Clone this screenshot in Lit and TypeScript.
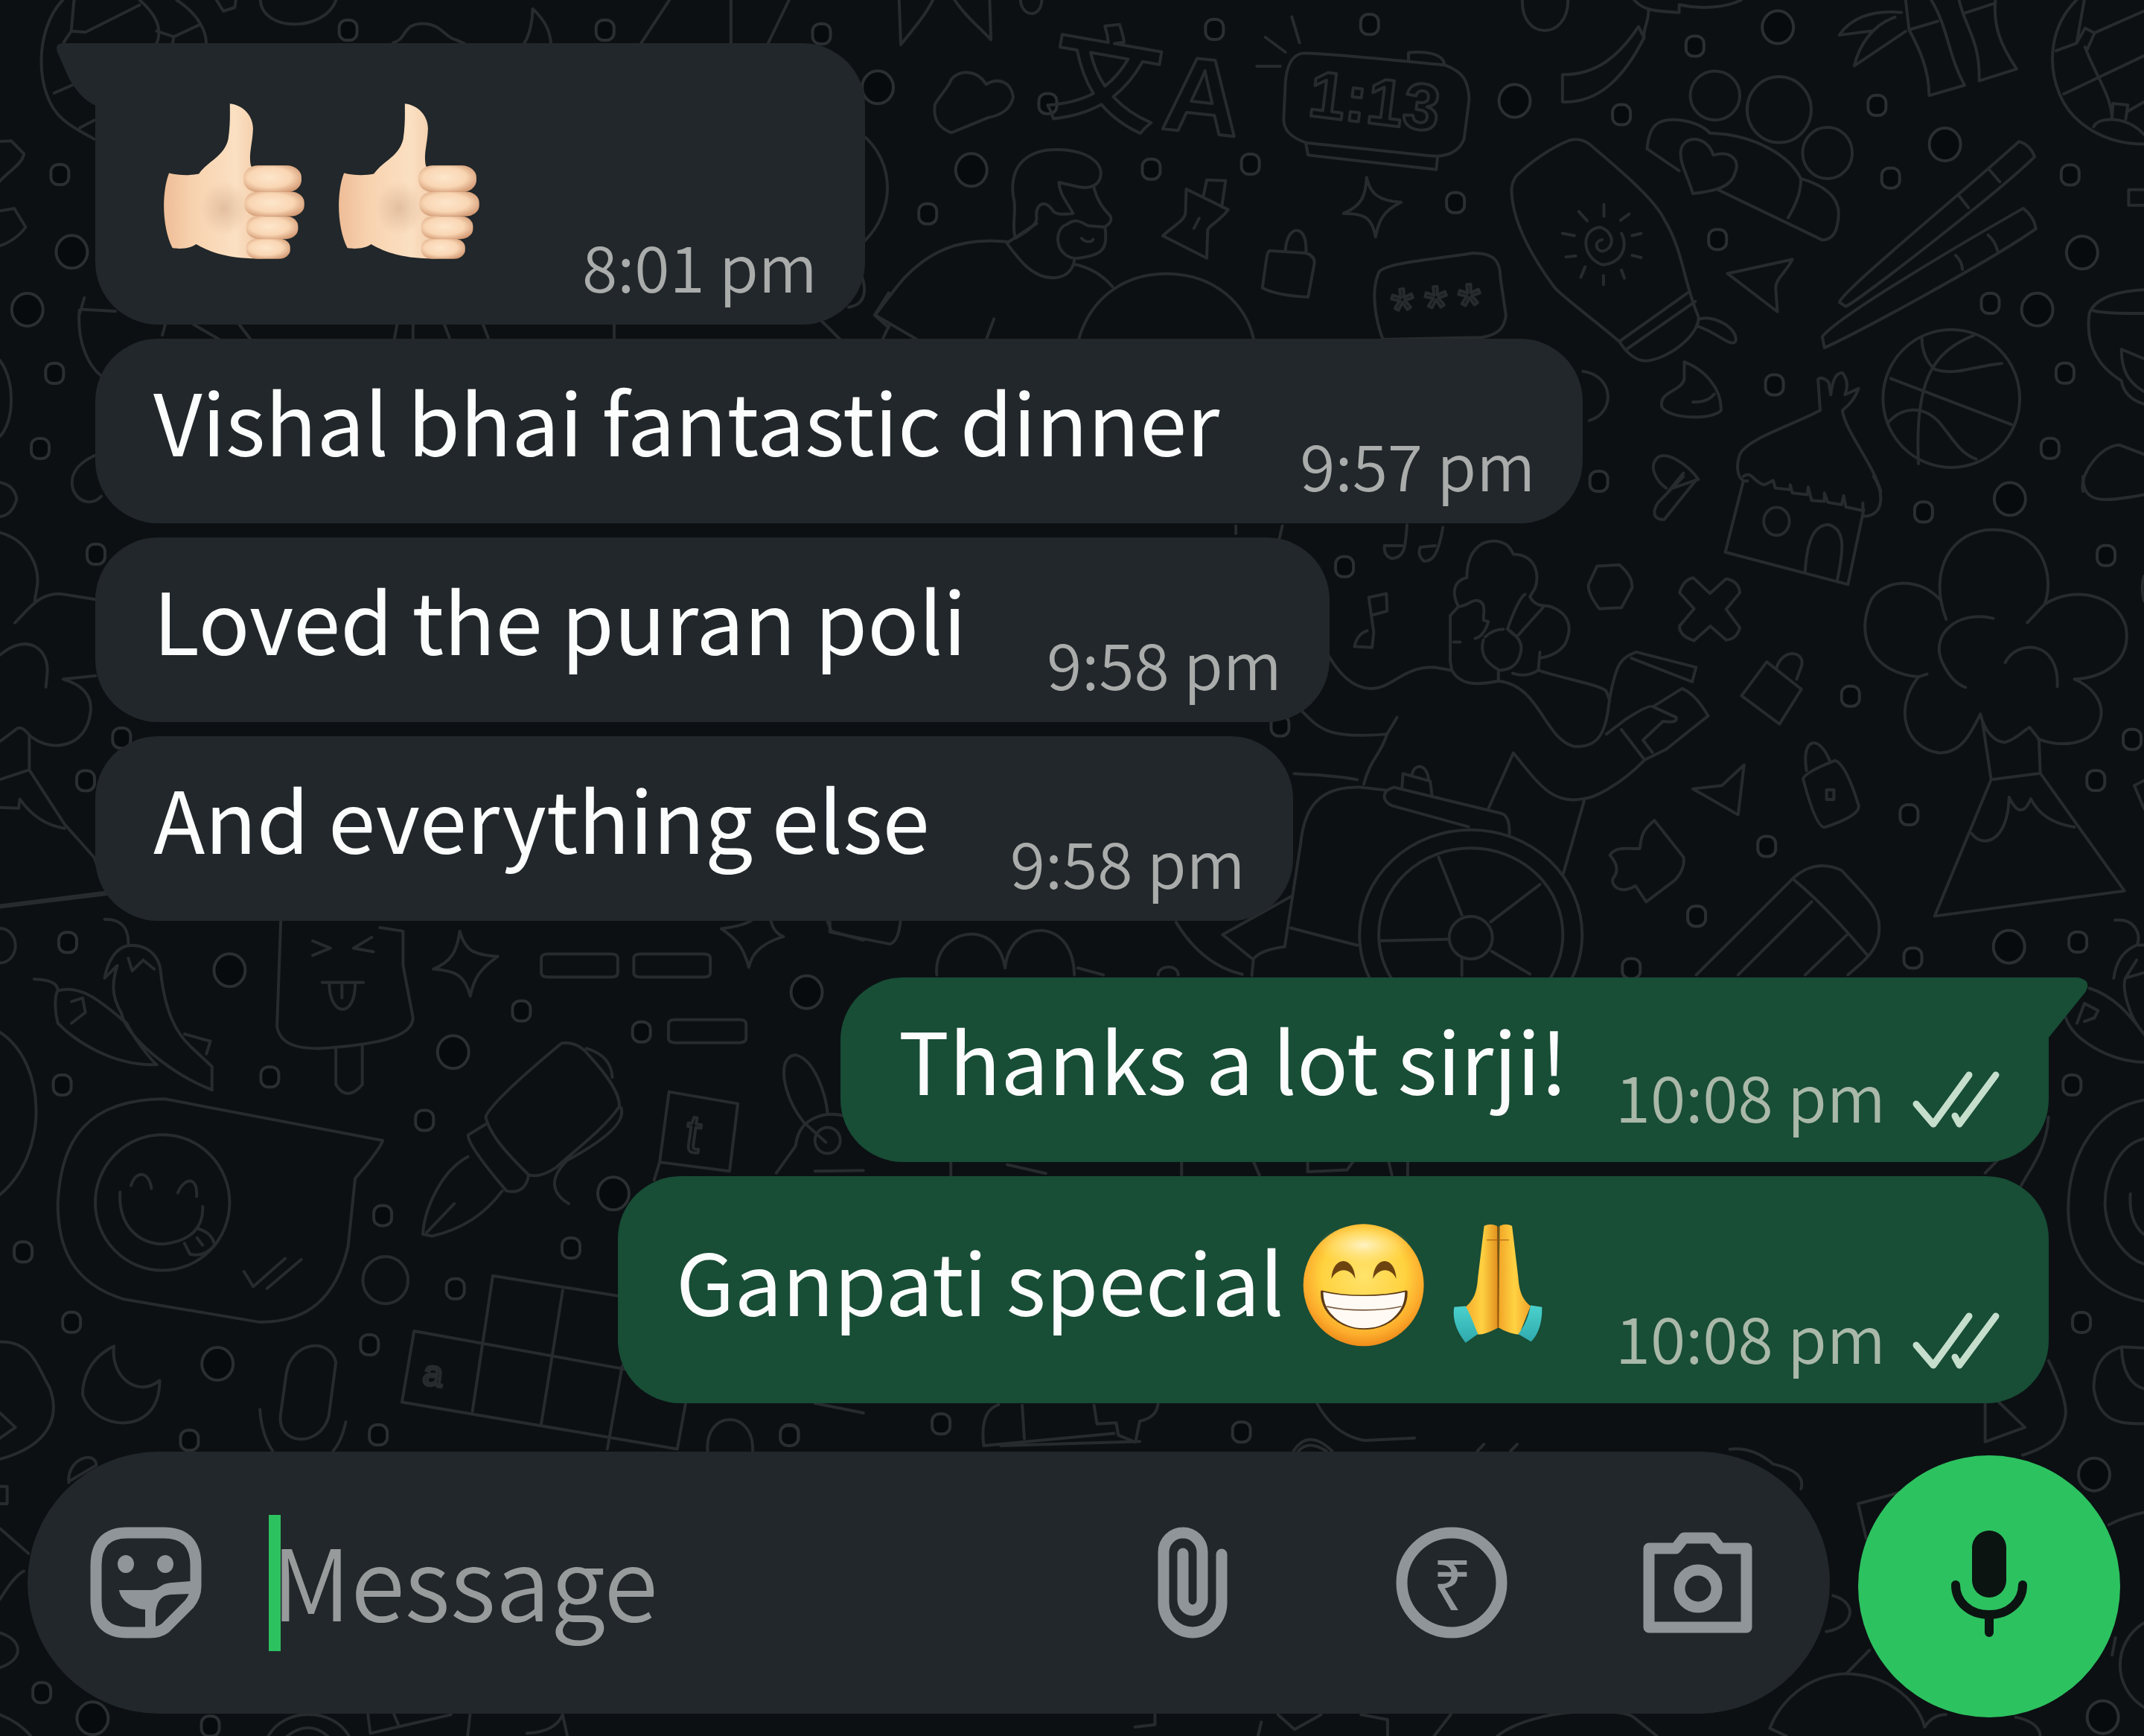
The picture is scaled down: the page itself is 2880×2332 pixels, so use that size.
import { LitElement, html, svg, css, nothing } from "lit";
import { customElement, property } from "lit/decorators.js";

type Point = [number, number];
type Ellipse = [number, number, number, number];

/** A patch of the wallpaper: its origin, the units per pixel of its drawing, and the drawing. */
interface Patch {
  x: number;
  y: number;
  sx: number;
  sy: number;
  paths: string[];
  beads?: Point[];
  rings?: Point[];
  ovals?: Ellipse[];
}

const patches: Patch[] = [
  {
    x: 0, y: 0, sx: 1.3067, sy: 3,
    paths: [
      "M110 0C60 120 60 380 110 480C130 520 150 540 165 560M130 0L125 125L112 170M125 125L150 130L245 20M245 0C275 60 285 120 275 175M310 0C350 60 362 130 362 175M275 125L305 148L350 100M305 148L303 175M95 375L135 335M140 515L165 485",
      "M380 0L392 45L412 30L414 0M457 0C460 130 570 130 590 0M690 172C715 160 705 95 742 95C775 95 780 150 800 160L815 175M920 175C930 140 935 80 935 35C960 90 965 130 967 175M1125 175L1175 0M1283 0V185M1385 0L1347 180",
      "M0 570L20 568L42 620C40 660 10 700 0 730M0 850L25 840L45 915C35 950 15 980 0 990",
      "M290 1308L285 1350M340 1308L385 1368M420 1308L440 1368M697 1308L692 1368M725 1308V1368M780 1308L790 1368M848 1308L858 1368M1078 1300V1368M1440 1290C1460 1330 1465 1350 1475 1368M1560 1180L1535 1270L1560 1320",
    ],
    beads: [[611, 120], [1062, 120], [1442, 135], [105, 702]],
    rings: [[126, 1015], [48, 1248]],
  },
  {
    x: 1140, y: 0, sx: 1.742, sy: 3,
    paths: [
      "M118 0L122 180C150 120 180 60 197 0M248 0C270 60 300 100 333 160L330 0M402 0C405 70 450 75 452 0",
      "M202 420C215 380 235 350 240 320C260 280 300 280 322 340C350 310 380 330 385 390C380 440 355 465 325 475L240 535C205 510 198 470 202 420Z",
      "M1060 215C1100 210 1350 255 1395 262C1440 290 1450 330 1452 400L1440 560C1430 610 1400 635 1360 628L1070 575C1030 550 1018 520 1018 480L1022 330C1025 270 1035 225 1060 215ZM1310 240L1310 212C1350 205 1390 215 1394 258M1070 580L1075 625L1375 683L1378 632M975 150L1022 210M1037 68L1055 172M955 267H1010",
      "M390 960C380 900 395 850 385 790C375 650 430 600 490 603C560 605 600 660 588 720C580 760 550 760 530 750L492 735C495 790 510 810 525 860C500 865 485 865 478 850C460 800 435 820 440 880C440 910 410 940 390 960M573 750C580 800 590 830 612 870C620 900 600 910 600 915C605 1000 600 1030 530 1042C480 1030 480 920 510 905C530 880 540 890 560 910L600 915M545 960C555 980 570 975 572 965",
      "M370 980C400 1050 430 1120 480 1120C515 1115 525 1080 528 1050M528 1065C570 1080 600 1120 617 1155M370 980L440 900M375 975C250 950 180 1030 130 1120C100 1180 80 1230 62 1270L160 1368M95 1310L80 1365M340 1285L322 1368",
      "M538 1368C570 1180 660 1100 745 1103C860 1105 930 1230 948 1368M30 540C110 650 110 850 35 975M30 1110C45 1180 35 1230 0 1238",
      "M790 762L888 845C870 890 840 910 840 930L838 1040L735 950C760 910 785 890 788 860ZM830 790L838 725L882 728L873 835M808 920L820 880",
      "M1212 715C1220 780 1240 810 1293 815C1250 850 1240 890 1233 955C1225 880 1210 860 1158 860C1200 830 1210 790 1212 715Z",
      "M985 1010L1070 1020Q1090 1030 1090 1060L1075 1197Q1000 1190 968 1160L978 1040Q980 1015 985 1010ZM1022 1010C1025 900 1075 900 1070 1018",
      "M1240 1100C1250 1060 1350 1050 1460 1020C1510 1020 1525 1050 1525 1120L1538 1270C1535 1320 1520 1350 1480 1360L1250 1368C1235 1300 1220 1180 1240 1100Z",
    ],
    beads: [[466, 416], [856, 117], [1219, 97], [708, 680], [940, 660], [185, 860], [1420, 815]],
    rings: [[68, 352], [287, 685]],
  },
  {
    x: 1980, y: 0, sx: 1.742, sy: 2.376,
    paths: [
      "M113 0C110 130 220 130 220 0M375 0C400 40 440 35 480 40L480 15C530 30 590 25 625 0M408 30C410 70 395 90 398 120C350 250 290 330 207 325V238C290 240 340 170 372 110L385 85L398 120",
      "M480 545L405 475C410 400 430 380 470 382C510 385 540 405 552 425C660 430 740 500 765 570C840 600 855 650 853 690C850 740 840 765 815 766L570 605M765 570C765 620 750 660 735 695",
      "M512 618C500 560 480 520 484 480C490 430 545 430 560 495C600 480 625 510 610 555C600 600 560 610 512 618Z",
      "M100 560C130 520 180 470 225 447Q250 440 270 460C330 530 420 630 445 700C490 800 490 900 525 1010C530 1070 450 1150 400 1152C370 1150 350 1110 340 1090C280 1020 210 950 190 920C130 810 90 700 88 610Q88 580 100 560ZM340 1090L505 930M360 1112L518 962M525 1020C560 1000 620 1050 612 1090C600 1110 570 1060 520 1040",
      "M300 765C280 770 285 800 300 802C330 795 330 740 295 725C250 730 250 820 300 845C350 840 360 780 345 745M304 652V690M245 675L265 705M363 683L343 703M207 745L235 752M391 745L370 752M215 820L238 817M391 822L370 815M250 885L260 852M303 908V880M352 888L345 862",
      "M593 873L745 828C730 870 705 890 706 920L710 995Z",
      "M855 965C860 930 1130 630 1275 452Q1300 460 1312 500C1240 600 900 960 870 978ZM1205 540L1230 580M1135 625L1157 663M815 1075C850 1010 1150 770 1285 665Q1310 690 1315 730C1200 840 900 1060 820 1110ZM1203 750Q1220 770 1225 800M1127 815Q1142 835 1143 860",
      "M855 112C880 60 930 30 1000 40M855 112L935 98M890 210C900 150 930 80 985 55M890 210L1010 100M1010 0L1018 95C1040 150 1065 220 1065 305L1148 272C1110 180 1110 90 1070 0M1018 95L1085 68M1135 0C1150 90 1185 130 1182 258L1270 220C1230 140 1215 80 1220 0M1148 42L1220 10",
      "M1410 0C1350 80 1340 200 1370 300C1400 400 1480 460 1568 460M1362 162L1410 138L1428 0M1410 138L1430 90L1452 105L1568 35M1452 105L1435 158M1430 150C1450 230 1490 300 1493 375M1380 300L1568 178M1450 405C1460 370 1530 370 1568 430M1493 375L1495 330L1530 335L1525 380M1568 325L1530 355M1568 605H1532V655H1568",
      "M1170 1070C1080 1120 1030 1200 1040 1480M1048 1080C1048 1120 1060 1160 1080 1180C1130 1200 1180 1165 1235 1160M975 1208L1258 1355M968 1350C1000 1300 1050 1290 1090 1350C1120 1400 1140 1450 1175 1465",
      "M1568 925C1490 930 1450 960 1440 1000C1430 1100 1460 1170 1515 1215C1520 1260 1545 1280 1568 1290M1450 992C1480 1002 1530 1000 1568 1000M1568 1145L1515 1115C1515 1180 1530 1220 1568 1250",
      "M492 1155C540 1180 580 1240 578 1310C560 1340 460 1340 440 1300C430 1250 485 1250 492 1210ZM512 1283C540 1285 555 1270 562 1258M255 1185C330 1200 330 1320 270 1342",
      "M810 1310L805 1210Q815 1200 830 1220L835 1260Q840 1190 862 1190Q880 1220 868 1260L900 1240Q890 1280 862 1310C870 1380 930 1470 952 1568M810 1310C740 1360 640 1400 622 1450C610 1500 620 1540 640 1535M460 1560L525 1530C500 1480 450 1440 430 1460C405 1490 430 1540 450 1558M490 1510L455 1568",
      "M1425 1568C1415 1510 1470 1420 1510 1420L1568 1450",
    ],
    beads: [[517, 146], [345, 365], [943, 335], [975, 567], [570, 763], [1395, 557], [1208, 967], [703, 1227], [1383, 1190], [1348, 1430], [292, 1535]],
    rings: [[711, 87], [95, 322], [1102, 461], [1423, 806], [1318, 988]],
    ovals: [[564, 305, 58, 78], [714, 350, 75, 105], [827, 488, 58, 82], [1117, 1272, 160, 220]],
  },
  {
    x: 1980, y: 640, sx: 1.742, sy: 2.24,
    paths: [
      "M520 10L445 130C415 130 420 100 430 80L490 0",
      "M630 15L588 228L875 325L912 100M912 120C960 120 960 50 935 0M775 285C780 180 800 145 830 145C870 160 865 220 850 312M630 0C650 -20 655 20 680 25L700 12L705 35L740 40V25L745 50L780 55L782 32L790 72L820 75V50L828 78L860 85L865 58L870 92L910 103V80",
      "M1425 0C1425 80 1465 80 1568 55M288 270L340 266Q372 300 370 335L345 395L293 398Q265 350 268 325Z",
      "M513 305L552 352L590 308Q620 315 622 350L590 400L622 455Q615 490 590 492L553 450L515 494Q480 480 481 450L515 398L481 350Q490 310 513 305Z",
      "M685 558L766 640L715 745L626 660ZM708 575C725 510 780 530 765 575L755 610M770 910Q775 890 845 855Q870 865 900 990Q905 1020 820 1056Q800 1055 770 910ZM778 885C765 780 810 780 832 855M825 943H842V972H825Z",
      "M512 940L580 930L632 868L618 1018Z",
      "M422 1035L490 1145Q495 1180 470 1215L403 1280L378 1232C340 1260 320 1230 325 1210C345 1180 325 1150 318 1140C330 1115 350 1120 388 1120C392 1070 400 1060 422 1035Z",
      "M1105 430C1060 280 1120 160 1215 160C1330 160 1360 300 1335 385L1295 440M1090 370C1040 300 960 310 930 370C890 480 930 590 1040 603L1060 595M1215 427C1130 400 1060 480 1100 570Q1120 620 1150 635M1335 385C1400 330 1500 350 1525 450C1540 550 1480 605 1405 610C1460 640 1480 700 1460 750C1440 810 1370 815 1320 790M1243 560C1270 490 1370 490 1365 632M1040 603C980 700 1010 820 1090 832C1140 830 1160 780 1185 715C1195 770 1220 800 1243 800C1270 790 1280 770 1300 755L1322 790L1325 893L1210 912L1190 740",
      "M1210 912L1078 1323L1522 1247L1325 893M1165 1075C1190 1120 1250 1100 1252 965Q1280 1040 1303 970Q1330 1040 1405 1055",
      "M520 1500L750 1205Q800 1150 860 1185C920 1270 950 1300 948 1360C950 1430 900 1470 875 1500M750 1215C820 1290 880 1380 920 1440M618 1500L790 1280M775 1500L872 1380",
      "M1568 300C1560 330 1565 360 1568 375M1568 915L1545 930L1568 1000M1500 1335C1550 1330 1560 1380 1552 1410C1510 1430 1500 1480 1497 1510M1552 1410H1568",
    ],
    beads: [[1052, 106], [1479, 237], [881, 660], [685, 1112], [1018, 1017], [1455, 914], [521, 1322], [1027, 1448], [1413, 1400], [1540, 790], [368, 1480]],
    rings: [[1254, 68], [1252, 1415]],
    ovals: [[708, 135, 30, 42]],
  },
  {
    x: 1640, y: 680, sx: 2.24, sy: 2.45,
    paths: [
      "M402 462L455 465L460 415L445 300L498 288L500 345L460 357M402 462Q410 420 440 410M560 62C555 130 555 170 515 172Q490 165 492 130L545 130M668 70C655 150 640 185 610 180Q590 160 600 135L645 130M185 65L175 110M45 65V90",
      "M740 235C740 150 780 110 830 115C860 120 870 135 880 158C950 160 960 230 945 270L930 298C940 320 960 330 985 328C1050 350 1060 400 1035 455C1010 490 980 495 960 500M740 235C690 250 700 300 715 330C740 330 750 310 770 310C800 315 790 350 790 375L805 380Q790 430 765 435M715 330L690 360V510L695 540M700 447H720M795 430Q820 405 850 405M915 290C900 300 880 350 862 405L890 430L968 335M862 405C900 430 910 460 900 490C890 530 860 540 838 540C790 510 780 480 790 440M960 480L955 540Q920 565 878 550",
      "M310 465C360 570 410 600 450 600C520 600 540 530 640 530L695 540C720 590 770 590 835 575C960 590 970 760 1060 790C1150 800 1160 720 1170 630C1190 520 1200 500 1250 480L1430 530L1418 578L1235 500M955 540C1040 570 1150 590 1160 610L1170 640M835 575V545",
      "M1160 750L1220 700Q1290 650 1300 660L1370 695Q1375 715 1330 708L1270 770L1298 810M1300 660L1388 600Q1430 620 1466 690L1340 800L1275 835L1205 735",
      "M1275 835C1200 920 1120 960 1095 962C1000 985 960 920 880 812L805 995M1095 962L1030 1210M240 670C300 740 330 765 500 750L530 695M500 750C480 820 450 830 430 915M220 880C280 885 350 885 410 900",
      "M240 1110C250 1000 290 920 420 925L500 935L520 925L840 1010Q870 1015 868 1080M500 935C480 960 500 985 530 990L745 1055M545 925L548 880Q580 890 630 905L635 950M575 885C580 845 620 845 625 900",
      "M655 1155L725 1345M960 1245L812 1368M480 1430L685 1425M725 1485V1545M815 1465L930 1540M240 1110L192 1450Q120 1460 98 1490L93 1545M210 1388L410 1445M210 1285L5 1410L95 1490",
    ],
    beads: [[372, 198], [178, 722]],
    ovals: [[752, 1410, 335, 345], [752, 1410, 277, 285], [752, 1420, 65, 70]],
  },
  {
    x: 0, y: 1200, sx: 1.352, sy: 2.063,
    paths: [
      "M0 38L195 2M0 385C85 470 90 720 0 835",
      "M190 72Q235 70 233 145C265 140 290 170 292 220C300 330 320 390 350 430L385 480L385 545C310 500 230 400 220 330C200 280 205 240 213 200L190 235C195 190 210 150 233 145M233 180L240 215L260 185L280 210M62 238Q105 240 105 270C150 250 190 310 230 360C250 420 280 470 285 475C200 480 130 400 105 360C98 320 100 280 105 270M130 300L150 290L155 330L130 360M335 390L382 410L375 445",
      "M510 75L503 370C510 420 540 430 580 430C680 420 750 400 750 345L732 200V105L690 95M610 430V530Q630 580 658 530V425M568 132L600 152L568 172M675 122L642 152L678 162M585 247H660M598 250C598 340 645 350 645 250M621 255V290",
      "M835 105C845 160 860 170 904 175C870 210 860 240 854 285C845 230 830 215 787 210C820 190 830 160 835 105ZM1310 98Q1350 90 1365 75M1400 75Q1405 110 1423 120C1380 140 1365 170 1360 205C1350 150 1340 130 1310 98",
      "M995 168H1110Q1122 168 1122 180V220Q1122 232 1110 232H995Q983 232 983 220V180Q983 168 995 168ZM1163 168H1278Q1290 168 1290 180V220Q1290 232 1278 232H1163Q1151 232 1151 220V180Q1151 168 1163 168ZM1226 350H1343Q1355 350 1355 362V402Q1355 414 1343 414H1226Q1214 414 1214 402V362Q1214 350 1226 350Z",
      "M300 570L695 685Q690 710 645 790L632 980C610 1120 560 1190 470 1188L225 1125C130 1080 105 980 105 860C110 680 160 570 300 570Z",
      "M218 828C215 920 250 970 295 972C350 965 370 920 368 868M238 810C245 770 270 765 275 818M323 830C335 785 360 785 357 840M345 1000L335 970M360 930Q385 940 390 975Q370 1010 345 1000M358 955L368 975M443 1048L460 1090L518 1012M485 1095L547 1015",
      "M1020 415Q1050 410 1070 450C1100 500 1125 550 1125 590C1100 650 1030 730 1010 760Q980 790 960 780C920 720 890 670 882 620Q890 580 1020 415ZM882 640L850 670Q850 700 920 825Q955 835 960 780M850 730C800 770 770 880 768 945L785 950C840 930 880 890 912 825M775 940L825 860M1065 430Q1110 450 1112 510M1128 595Q1140 650 1030 740C990 800 1010 840 1033 860",
      "M1215 550L1340 583L1325 770L1198 745L1215 550M1198 745L1188 795M1503 78L1510 105L1568 130",
      "M1460 635C1420 560 1410 450 1445 448C1480 460 1500 560 1503 610M1445 700C1450 620 1500 600 1540 620M1445 700L1410 775M1480 770L1568 768M1460 635L1500 690",
      "M895 1060L1140 1120M895 1060L858 1435M752 1213L1140 1320M752 1213L730 1410L1230 1540M1022 1100L983 1470M1130 1310L1103 1540M1245 1415L1230 1540M1285 1545C1280 1430 1370 1430 1367 1545M1480 1413L1568 1440",
      "M207 1255C160 1290 150 1350 150 1390C170 1490 290 1510 290 1350C250 1400 200 1340 207 1255ZM520 1330C530 1240 600 1230 610 1300L597 1450C580 1540 500 1530 510 1440ZM472 1430Q475 1500 495 1545M628 1465Q620 1520 605 1545",
      "M0 1243C60 1240 70 1320 90 1370C110 1450 90 1530 0 1568M0 1440L28 1480L0 1510",
    ],
    beads: [[123, 135], [947, 325], [113, 530], [490, 508], [1165, 383], [771, 628], [695, 892], [42, 993], [1037, 982], [827, 1095], [130, 1188], [671, 1250], [344, 1515], [687, 1500], [1434, 1500]],
    rings: [[417, 213], [823, 440], [1465, 274], [1114, 832], [395, 1304]],
    ovals: [[700, 1072, 41, 65], [0, 145, 28, 48], [295, 857, 122, 188], [1503, 685, 23, 36]],
  },
  {
    x: 0, y: 1920, sx: 1.568, sy: 3,
    paths: [
      "M145 215C140 120 200 80 203 145L150 205M0 400L60 500M0 685Q30 590 50 572M0 820C50 850 50 930 0 960M0 1150Q40 1180 65 1236M0 230H15V300H0",
      "M565 1236C600 1120 700 1120 735 1236M605 1236Q650 1170 690 1236M775 1150L780 1225L950 1150M830 1150L840 1195M990 1150L985 1236M1110 1225Q1170 1220 1185 1150L1195 1236",
    ],
    beads: [[88, 1060], [443, 1195]],
    rings: [[195, 1165]],
  },
  {
    x: 1480, y: 1940, sx: 1.12, sy: 3,
    paths: [
      "M945 20Q980 10 1010 80Q1060 110 1052 180M1100 610C1140 640 1130 740 1090 755M1155 830L1120 925C1060 930 1020 1040 1005 1145L1030 1176M1120 925C1190 930 1230 1050 1238 1140Q1250 1090 1270 1090M1375 1100Q1410 1120 1412 1176M1150 380L1138 240L1200 195M1515 325Q1540 290 1568 275M1568 720C1520 800 1520 980 1568 1060M1525 780L1520 850",
      "M595 1176C650 1060 780 1060 800 1100L835 1176M525 1090L500 1176M240 1120L235 1176M265 1090L290 1150L330 1090M390 1090L430 1110V1176M50 1140L80 1130V1090M295 30Q310 -20 338 28M565 28L575 0M615 28L625 0",
    ],
    rings: [[1493, 122], [1506, 1100]],
  },
  {
    x: 0, y: 400, sx: 3, sy: 1.782,
    paths: [
      "M320 30C310 100 350 160 408 187M320 40L340 0M335 28L465 32M0 150C60 200 60 290 0 332M0 442Q60 450 67 482Q50 520 0 524M380 378C300 400 280 430 295 460C320 495 380 495 408 475",
      "M0 562C110 580 160 640 150 690L140 725M60 778C110 750 160 700 260 710L385 722M0 855C110 800 200 840 190 900L185 932M255 913L385 905M255 913C350 930 370 960 365 990C350 1080 200 1090 118 1047Q85 1020 60 1035L0 1062M118 1047V1130L0 1153M118 1130L260 1260L380 1340L430 1423L0 1455M0 1220L75 1222L80 1200Q150 1260 260 1270",
    ],
    beads: [[220, 180], [162, 360], [387, 613], [345, 1155], [490, 1053]],
  },
  {
    x: 2640, y: 1280, sx: 3, sy: 2.063,
    paths: [
      "M500 98C600 120 660 170 720 225M405 180C430 240 580 300 720 303M450 195L480 140L535 160L520 180L480 190M720 225C660 180 630 100 645 70L690 20M645 70L720 55",
      "M720 408C530 430 410 560 415 720C420 850 540 940 720 965M720 515C620 530 560 620 563 700C570 790 660 850 720 862M665 668C660 720 680 760 720 780",
      "M335 455C330 540 260 600 225 645M130 575L80 610M335 1130C380 1190 400 1230 405 1270C400 1340 330 1370 230 1392M80 1245V1355L240 1315L135 1245M720 1095L630 1092C540 1110 515 1160 518 1210C540 1300 620 1305 720 1305M630 1092C630 1160 670 1200 720 1208",
    ],
    beads: [[430, 365], [468, 1023]],
  },
  {
    x: 1000, y: 1220, sx: 1.742, sy: 2.119,
    paths: [
      "M200 40L200 68L340 102Q360 95 365 38M450 190C440 60 590 20 610 170C620 30 770 20 772 190M780 170L840 190M968 190C970 160 1015 160 1015 190M1010 40C1050 120 1100 170 1165 188",
      "M483 718V760M615 730L705 755M1023 718V760M1190 718L1205 760M1318 718V750L1410 745L1425 720M1507 718L1515 760M1552 718V760",
      "M595 1413Q550 1430 560 1530L865 1495M600 1530L925 1518M650 1415L655 1510M818 1415L825 1468L870 1465L875 1500L915 1520L925 1460Q965 1450 968 1410M1340 1410Q1380 1500 1450 1515L1568 1508M1285 1545Q1320 1480 1375 1545",
    ],
    beads: [[105, 1500], [460, 1467], [1163, 1490]],
  },
];

@customElement("chat-wallpaper")
class ChatWallpaper extends LitElement {
  static styles = css`
    :host { display: block; }
    .canvas { display: block; width: 100%; height: 100%; }
    .lines { fill: none; stroke: #272b2d; stroke-width: 4; stroke-linejoin: round; stroke-linecap: round; }
    .lines path, .lines ellipse { vector-effect: non-scaling-stroke; }
    .bead { fill: #080b0e; stroke: #2b2f31; }
    .letter { font-family: "Liberation Sans", "Noto Sans CJK SC", sans-serif; }
  `;

  render() {
    return html`
      <svg class="canvas" viewBox="0 0 2880 2332" preserveAspectRatio="xMidYMin slice" aria-hidden="true">
        <g class="lines">
          ${patches.map((p) => svg`
            <g transform="translate(${p.x} ${p.y}) scale(${1 / p.sx} ${1 / p.sy})">
              ${p.paths.map((d) => svg`<path d=${d} />`)}
              ${(p.ovals ?? []).map(([cx, cy, rx, ry]) => svg`<ellipse cx=${cx} cy=${cy} rx=${rx} ry=${ry} />`)}
            </g>
            ${(p.beads ?? []).map(([x, y]) => svg`
              <rect class="bead" x=${p.x + x / p.sx - 12} y=${p.y + y / p.sy - 13} width="24" height="27" rx="10" />`)}
            ${(p.rings ?? []).map(([x, y]) => svg`
              <ellipse class="bead" cx=${p.x + x / p.sx} cy=${p.y + y / p.sy} rx="21" ry="22" />`)}
          `)}
          <g class="letter">
            <text x="1412" y="158" font-size="148" font-weight="700" transform="rotate(10 1486 100)">文</text>
            <text x="1564" y="178" font-size="144" font-weight="700" transform="rotate(6 1612 120)">A</text>
            <text x="1758" y="166" font-size="88" font-weight="700" transform="rotate(7 1846 140)">1:13</text>
            <text x="1868" y="440" font-size="80" letter-spacing="14" transform="rotate(-4 1930 400)">***</text>
            <text x="922" y="1548" font-size="72" transform="rotate(8 935 1520)">t</text>
            <text x="568" y="1862" font-size="48" transform="rotate(8 585 1850)">a</text>
          </g>
        </g>
      </svg>`;
  }
}

const thumb = html`
  <svg class="thumb" viewBox="285 412 255 636" preserveAspectRatio="none" role="img" aria-label="👍🏻">
    <defs>
      <linearGradient id="palm" x1="0" x2="1">
        <stop offset="0" stop-color="#eebd97" /><stop offset=".3" stop-color="#f8d3b0" />
        <stop offset=".7" stop-color="#fbe0c2" /><stop offset="1" stop-color="#efc6a2" />
      </linearGradient>
      <radialGradient id="knuckle" cx=".45" cy=".45" r=".62">
        <stop offset="0" stop-color="#fde6cb" /><stop offset=".6" stop-color="#f9d6b4" /><stop offset="1" stop-color="#d39a74" />
      </radialGradient>
      <radialGradient id="hollow"><stop offset="0" stop-color="#d3ab8c" stop-opacity=".6" /><stop offset="1" stop-color="#d3ab8c" stop-opacity="0" /></radialGradient>
    </defs>
    <path fill="url(#palm)" d="M405 416C430 422 447 470 446 520C445 580 438 620 442 665L470 780L460 1043C395 1045 365 1010 345 985C335 1003 315 1006 303 1000C285 920 283 780 297 697C315 707 335 707 350 700C365 650 395 630 402 560C406 500 405 450 405 416Z" />
    <ellipse cx="395" cy="840" rx="42" ry="110" fill="url(#hollow)" />
    <g fill="url(#knuckle)">
      <rect x="434" y="962" width="78" height="82" rx="20" ry="36" />
      <rect x="434" y="871" width="92" height="93" rx="22" ry="42" />
      <rect x="431" y="772" width="106" height="100" rx="24" ry="44" />
      <rect x="429" y="666" width="103" height="108" rx="26" ry="48" />
    </g>
  </svg>`;

const grin = html`
  <svg class="grin" viewBox="79 124 235 497" preserveAspectRatio="none" role="img" aria-label="😁">
    <defs>
      <radialGradient id="face" cx=".5" cy=".42" r=".58">
        <stop offset="0" stop-color="#ffe36b" /><stop offset=".6" stop-color="#ffd23f" />
        <stop offset=".85" stop-color="#fcab2b" /><stop offset="1" stop-color="#ee8c1b" />
      </radialGradient>
      <radialGradient id="shine"><stop offset="0" stop-color="#fff3c4" /><stop offset="1" stop-color="#ffe58c" stop-opacity="0" /></radialGradient>
    </defs>
    <ellipse cx="196" cy="372" rx="116" ry="247" fill="url(#face)" />
    <ellipse cx="196" cy="210" rx="88" ry="80" fill="url(#shine)" />
    <path fill="#6d4410" d="M134 347C136 250 178 250 180 347C170 300 146 300 134 347ZM214 347C216 250 257 250 259 347C249 300 226 300 214 347Z" />
    <path fill="#fffaf3" stroke="#5b3a16" stroke-width="5" stroke-linejoin="round" d="M116 396C160 420 232 420 278 396C280 480 245 549 197 549C150 549 114 480 116 396Z" />
    <path fill="none" stroke="#7b5d42" stroke-width="5" d="M125 458C165 478 230 478 269 458" />
  </svg>`;

const prayer = html`
  <svg class="prayer" viewBox="364 124 173 484" preserveAspectRatio="none" role="img" aria-label="🙏">
    <defs>
      <linearGradient id="left-hand" x1="0" x2="1"><stop offset="0" stop-color="#f7ac2c" /><stop offset=".5" stop-color="#ffd242" /><stop offset="1" stop-color="#e08d1c" /></linearGradient>
      <linearGradient id="right-hand" x1="0" x2="1"><stop offset="0" stop-color="#f2a527" /><stop offset=".5" stop-color="#ffd242" /><stop offset="1" stop-color="#f2a12a" /></linearGradient>
      <linearGradient id="cuff" x1="0" x2="0" y1="0" y2="1"><stop offset="0" stop-color="#4bd2cd" /><stop offset="1" stop-color="#2fa9ad" /></linearGradient>
    </defs>
    <path fill="url(#left-hand)" d="M424 132Q436 120 449 132L452 545C430 570 415 577 408 572L388 462C405 430 410 400 412 340Z" />
    <path fill="url(#right-hand)" d="M454 132Q466 120 478 132L490 340C492 400 498 430 514 458L492 574C480 572 465 562 452 545Z" />
    <path fill="none" stroke="#9c5a0c" stroke-width="3" d="M451 135V545M429 190H472" />
    <path fill="url(#cuff)" d="M366 462L388 458C400 500 405 540 412 572L388 607C370 560 362 510 366 462ZM514 455L536 462C537 520 530 570 515 603L490 572C502 540 510 500 514 455Z" />
  </svg>`;

@customElement("chat-bubble")
class ChatBubble extends LitElement {
  @property() time = "";
  @property({ type: Boolean, reflect: true }) outgoing = false;
  @property({ type: Boolean, reflect: true }) tail = false;

  static styles = css`
    :host {
      --paint: #21272a;
      position: relative;
      display: flex;
      align-items: flex-end;
      align-self: flex-start;
      gap: 108px;
      padding: 0 64px 0 78px;
      border-radius: 84px;
      background: var(--paint);
      color: #fbfcfc;
    }
    :host([outgoing]) { --paint: #184d36; align-self: flex-end; gap: 64px; }
    :host([tail]:not([outgoing])) { border-top-left-radius: 0; }
    :host([tail][outgoing]) { border-top-right-radius: 0; }
    :host([tail])::before {
      content: "";
      position: absolute;
      top: 0;
      width: 56px;
      height: 84px;
      background: var(--paint);
    }
    :host([tail]:not([outgoing]))::before { right: calc(100% - 1px); clip-path: path("M56 0H12Q0 0 4 12L20 48Q36 76 56 84Z"); }
    :host([tail][outgoing])::before { left: calc(100% - 1px); clip-path: path("M0 0H40Q60 4 50 20L0 82Z"); }
    .stamp { display: flex; align-items: flex-end; gap: 36px; padding-bottom: 28px; }
    :host([outgoing]) .stamp { padding-bottom: 38px; }
    time { font-size: 86px; line-height: 104px; font-weight: 350; color: #a9acaa; white-space: nowrap; }
    :host([outgoing]) time { color: #a9b8a8; }
    .ticks { width: 119px; height: 76px; margin-bottom: 8px; fill: none; stroke: #c6dfcd; stroke-width: 9; stroke-linecap: round; stroke-linejoin: round; }
  `;

  render() {
    return html`
      <slot></slot>
      <span class="stamp">
        <time>${this.time}</time>
        ${this.outgoing
          ? html`<svg class="ticks" viewBox="0 0 119 76" role="img" aria-label="Delivered">
              <path d="M5 44L28 71L76 5M57 60L63 71L112 5" />
            </svg>`
          : nothing}
      </span>`;
  }
}

@customElement("app-root")
class AppRoot extends LitElement {
  static styles = css`
    :host {
      position: relative;
      display: block;
      overflow: hidden;
      background: #0c1013;
      font-family: "Noto Sans CJK SC", "Noto Sans", sans-serif;
    }
    .wallpaper { position: absolute; inset: 0; }
    .page { position: relative; display: flex; flex-direction: column; gap: 65px; padding-bottom: 25px; }
    .thread { display: flex; flex-direction: column; gap: 19px; padding: 58px 128px 0; }
    .reply { margin-top: 57px; }
    .text { margin: 0; padding: 39px 0 69px; font-size: 114px; line-height: 140px; white-space: nowrap; }
    .text.smileys { padding: 64px 34px 76px 0; }
    .text.stickers { display: flex; gap: 42px; padding: 80px 28px 87px 12px; }
    .thumb { width: 193px; height: 211px; }
    .grin { width: 164px; height: 165px; vertical-align: -41px; }
    .prayer { width: 120px; height: 160px; margin-left: 12px; vertical-align: -36px; }

    .dock { display: flex; align-items: flex-end; gap: 38px; padding: 0 32px 0 37px; }
    .composer {
      flex: 1;
      min-width: 0;
      display: flex;
      align-items: center;
      min-height: 352px;
      margin-bottom: 5px;
      padding: 0 103px 0 84px;
      border-radius: 176px;
      background: #21272a;
      box-sizing: border-box;
    }
    button { display: grid; place-items: center; padding: 0; border: 0; background: none; color: #8f9598; cursor: pointer; }
    .tool { width: 150px; height: 150px; flex: none; }
    .tools { display: flex; gap: 180px; }
    .attach { margin-right: 18px; }
    .icon { fill: none; stroke: currentColor; stroke-width: 15; stroke-linecap: round; stroke-linejoin: round; }
    .solid { fill: currentColor; stroke: none; }
    .field { flex: 1; min-width: 0; display: flex; align-items: center; margin-left: 90px; }
    .caret { flex: none; width: 16px; height: 183px; background: #2dc260; }
    input {
      flex: 1;
      min-width: 0;
      height: 183px;
      margin: 0 0 0 -12px;
      padding: 0 0 12px;
      border: 0;
      outline: 0;
      background: none;
      box-sizing: border-box;
      font: inherit;
      font-size: 132px;
      font-weight: 350;
      color: #fbfcfc;
      caret-color: transparent;
    }
    input::placeholder { color: #989b9b; opacity: 1; }
    .record { flex: none; width: 352px; height: 352px; border-radius: 50%; background: #2dc260; color: #0b1411; }
  `;

  render() {
    return html`
      <chat-wallpaper class="wallpaper"></chat-wallpaper>
      <div class="page">
        <main class="thread">
          <chat-bubble tail time="8:01 pm"><p class="text stickers">${thumb}${thumb}</p></chat-bubble>
          <chat-bubble time="9:57 pm"><p class="text">Vishal bhai fantastic dinner</p></chat-bubble>
          <chat-bubble time="9:58 pm"><p class="text">Loved the puran poli</p></chat-bubble>
          <chat-bubble time="9:58 pm"><p class="text">And everything else</p></chat-bubble>
          <chat-bubble class="reply" outgoing tail time="10:08 pm"><p class="text">Thanks a lot sirji!</p></chat-bubble>
          <chat-bubble outgoing time="10:08 pm"><p class="text smileys">Ganpati special ${grin}${prayer}</p></chat-bubble>
        </main>
        <footer class="dock">
          <div class="composer">
            <button class="tool" type="button" aria-label="Stickers">
              <svg class="icon" width="150" height="150" viewBox="0 0 150 150">
                <path d="M50 8H99Q142 8 142 52V80Q142 93 133 104L101 136Q93 142 80 142H50Q8 142 8 98V52Q8 8 50 8Z" />
                <g class="solid">
                  <ellipse cx="48" cy="50" rx="11" ry="12" /><ellipse cx="101" cy="50" rx="11" ry="12" />
                  <path d="M39 85H82C94 84 94 76 110 75L136 73V90L109 91C95 92 90 100 88 116V138H74V111C55 110 41 98 39 85Z" />
                </g>
              </svg>
            </button>
            <label class="field">
              <span class="caret"></span>
              <input type="text" placeholder="Message" aria-label="Message" />
            </label>
            <div class="tools">
              <button class="tool attach" type="button" aria-label="Attach">
                <svg class="icon" width="94" height="150" viewBox="0 0 94 150">
                  <path d="M86 37V102A39 40 0 0 1 8 102V34A26 26 0 0 1 60 34V98A13 14 0 0 1 34 98V36" />
                </svg>
              </button>
              <button class="tool" type="button" aria-label="Payment">
                <svg class="icon" width="150" height="150" viewBox="0 0 150 150">
                  <circle cx="75" cy="75" r="67" />
                  <text class="solid" x="76" y="112" text-anchor="middle" font-size="94">₹</text>
                </svg>
              </button>
              <button class="tool" type="button" aria-label="Camera">
                <svg class="icon" width="150" height="136" viewBox="0 0 150 136">
                  <path d="M10 22H46L57 8H95L106 22H141V128H10Z" />
                  <circle cx="76" cy="76" r="25" />
                </svg>
              </button>
            </div>
          </div>
          <button class="record" type="button" aria-label="Record voice message">
            <svg width="102" height="150" viewBox="0 0 102 150">
              <rect x="28" y="0" width="46" height="90" rx="23" fill="currentColor" />
              <path d="M6 73C6 96 25 113 51 113C77 113 96 96 96 73M51 113V137" fill="none" stroke="currentColor" stroke-width="12" stroke-linecap="round" />
            </svg>
          </button>
        </footer>
      </div>`;
  }
}
